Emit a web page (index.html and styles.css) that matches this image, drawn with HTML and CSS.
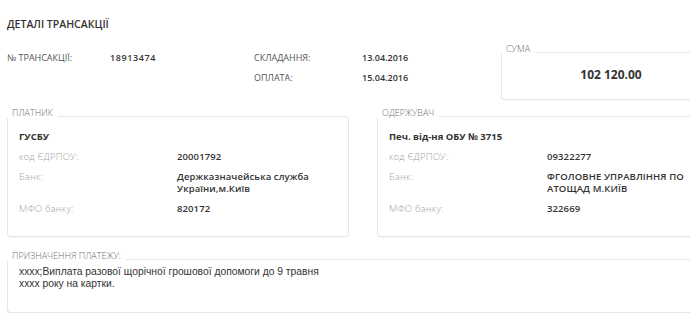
FILE: index.html
```html
<!DOCTYPE html>
<html lang="uk">
<head>
    <meta charset="UTF-8">
    <title>Деталі трансакції</title>
    <link rel="stylesheet" href="styles.css">
</head>
<body>
<div class="page">
    <h1 class="title">ДЕТАЛІ ТРАНСАКЦІЇ</h1>

    <div class="summary">
        <div class="meta">
            <span class="cap">№ ТРАНСАКЦІЇ:</span>
            <span class="val num">18913474</span>
            <span class="cap">СКЛАДАННЯ:</span>
            <span class="val">13.04.2016</span>
            <span></span>
            <span></span>
            <span class="cap">ОПЛАТА:</span>
            <span class="val">15.04.2016</span>
        </div>
        <fieldset class="box sum-box">
            <legend>СУМА</legend>
            <div class="sum">102 120.00</div>
        </fieldset>
    </div>

    <div class="parties">
        <fieldset class="box party">
            <legend>ПЛАТНИК</legend>
            <div class="party-name">ГУСБУ</div>
            <div class="row"><span class="lbl">код ЄДРПОУ:</span><span class="val">20001792</span></div>
            <div class="row"><span class="lbl">Банк:</span><span class="val">Держказначейська служба України,м.Київ</span></div>
            <div class="row"><span class="lbl">МФО банку:</span><span class="val">820172</span></div>
        </fieldset>
        <fieldset class="box party">
            <legend>ОДЕРЖУВАЧ</legend>
            <div class="party-name">Печ. від-ня ОБУ № 3715</div>
            <div class="row"><span class="lbl">код ЄДРПОУ:</span><span class="val">09322277</span></div>
            <div class="row"><span class="lbl">Банк:</span><span class="val">ФГОЛОВНЕ УПРАВЛІННЯ ПО АТОЩАД М.КИЇВ</span></div>
            <div class="row"><span class="lbl">МФО банку:</span><span class="val">322669</span></div>
        </fieldset>
    </div>

    <fieldset class="box purpose">
        <legend>ПРИЗНАЧЕННЯ ПЛАТЕЖУ:</legend>
        <p>xxxx;Виплата разової щорічної грошової допомоги до 9 травня<br>xxxx року на картки.</p>
    </fieldset>
</div>
</body>
</html>
```

FILE: styles.css
```css
html, body { margin: 0; overflow: hidden; background: #fff; }
body { font-family: "Open Sans", "Noto Sans", sans-serif; color: #333; }
.page { width: 712px; padding: 17px 0 0 7px; }

.title { margin: 0; font-size: 10.5px; line-height: 14px; font-weight: 600; color: #333; }

.summary { display: flex; align-items: flex-start; margin-top: 17px; }
.meta { display: grid; grid-template-columns: 103px 144px 108px 139px; grid-auto-rows: 20px; align-items: center; }
.cap { font-size: 9px; line-height: 12px; color: #555; }
.val { font-size: 9px; font-weight: 600; color: #333; line-height: 12px; }
.num { letter-spacing: 0.6px; }

.box { margin: 0; padding: 0; border: 1px solid #e6e6e6; border-top-color: #e6e6f4; border-radius: 4px; min-width: 0; box-shadow: 0 1px 1px rgba(0,0,0,0.03); }
.box legend { font-size: 9px; line-height: 10px; color: #6f6f6f; padding: 0 5px 7px 4px; font-weight: 300; }

.sum-box { flex: 0 0 218px; margin-top: -4px; }
.sum { text-align: center; font-size: 12px; font-weight: 700; line-height: 16px; padding: 6px 0 16px; color: #333; }

.parties { display: flex; gap: 28px; margin-top: 8px; }
.party { flex: 1 1 0; padding: 6px 11px 21px; }
.party legend { margin-left: -11px; }
.party-name { font-size: 9.5px; font-weight: 700; line-height: 12px; }
.row { display: flex; margin-top: 8px; }
.lbl { flex: 0 0 158px; font-size: 9.5px; line-height: 12px; color: #9f9f9f; font-weight: 300; letter-spacing: 0.2px; }
.row .val { flex: 1; font-size: 9.5px; letter-spacing: 0.1px; }

.purpose { margin-top: 14px; padding: 0 11px 22px; }
.purpose legend { margin-left: -11px; }
.purpose p { margin: -2px 0 0; font-family: "Liberation Sans", Arial, sans-serif; font-size: 10.3px; line-height: 12px; color: #333; }
```
